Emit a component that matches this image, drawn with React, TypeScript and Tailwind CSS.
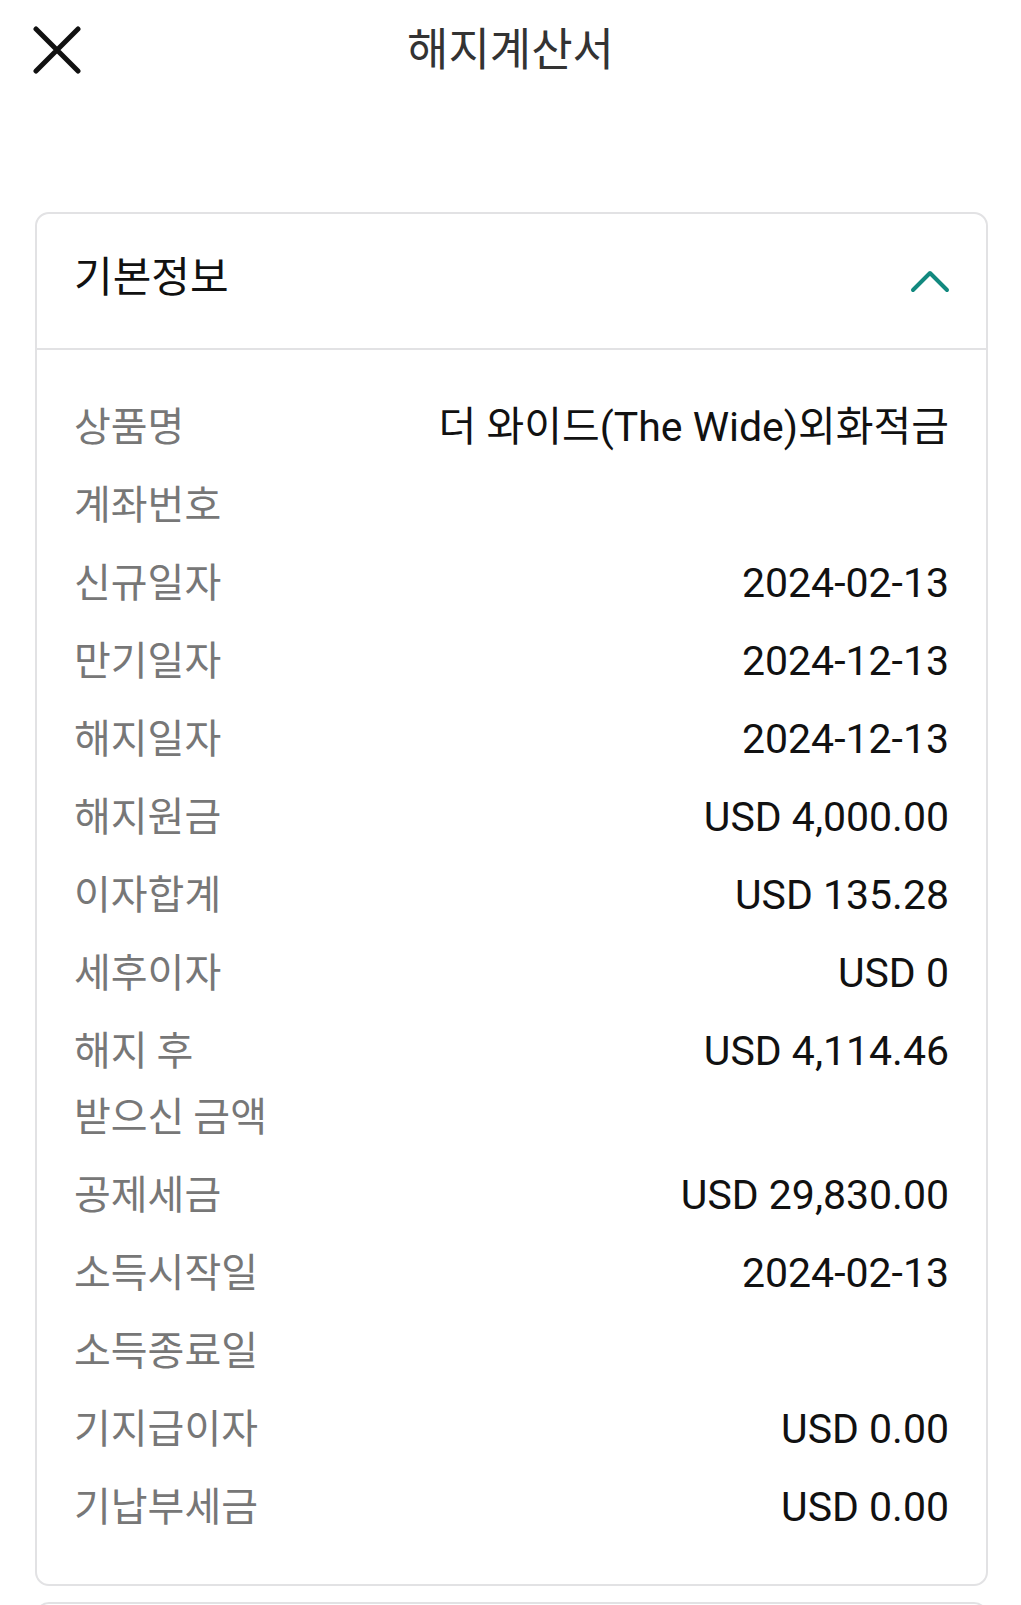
const rows: { label: React.ReactNode; value?: string }[] = [
  { label: '상품명', value: '더 와이드(The Wide)외화적금' },
  { label: '계좌번호' },
  { label: '신규일자', value: '2024-02-13' },
  { label: '만기일자', value: '2024-12-13' },
  { label: '해지일자', value: '2024-12-13' },
  { label: '해지원금', value: 'USD 4,000.00' },
  { label: '이자합계', value: 'USD 135.28' },
  { label: '세후이자', value: 'USD 0' },
  {
    label: (
      <>
        해지 후
        <br />
        받으신 금액
      </>
    ),
    value: 'USD 4,114.46',
  },
  { label: '공제세금', value: 'USD 29,830.00' },
  { label: '소득시작일', value: '2024-02-13' },
  { label: '소득종료일' },
  { label: '기지급이자', value: 'USD 0.00' },
  { label: '기납부세금', value: 'USD 0.00' },
]

const kr = { fontFamily: '"Noto Sans CJK KR", sans-serif' }

function CloseIcon() {
  return (
    <svg width="48" height="48" viewBox="0 0 48 48" fill="none">
      <path d="M3 3L45 45M45 3L3 45" stroke="#111" strokeWidth="5" strokeLinecap="round" />
    </svg>
  )
}

function ChevronUp() {
  return (
    <svg width="40" height="24" viewBox="0 0 40 24" fill="none">
      <path d="M3 21L20 4L37 21" stroke="#12897f" strokeWidth="4" strokeLinecap="round" strokeLinejoin="round" />
    </svg>
  )
}

export default function App() {
  return (
    <div
      className="h-[1605px] overflow-hidden bg-white"
      style={{ fontFamily: 'Roboto, "Noto Sans CJK KR", sans-serif' }}
    >
      {/* top bar */}
      <div className="grid h-[98px] grid-cols-[1fr_auto_1fr] items-center">
        <div className="pl-[33px] pt-[2px]">
          <CloseIcon />
        </div>
        <h1 className="pb-[6px] text-[45px] font-normal leading-none text-[#333]" style={kr}>
          해지계산서
        </h1>
        <div />
      </div>

      {/* basic info card */}
      <div className="ml-[35px] mr-[33px] mt-[114px] rounded-[14px] border-2 border-[#e2e2e4]">
        <div className="flex h-[136px] items-center justify-between border-b-2 border-[#e2e2e4] pl-[37px] pr-[36px]">
          <span className="pb-[15px] text-[42px] leading-none text-[#111]" style={kr}>
            기본정보
          </span>
          <ChevronUp />
        </div>
        <div className="flex flex-col gap-[12px] pb-[44px] pl-[37px] pr-[37px] pt-[44px]">
          {rows.map((r, i) => (
            <div key={i} className="flex items-start justify-between">
              <span className="relative -top-[3px] shrink-0 text-[40px] leading-[66px] text-[#777]" style={kr}>
                {r.label}
              </span>
              {r.value && (
                <span className="h-[66px] text-right text-[41px] leading-[66px] text-[#111]">{r.value}</span>
              )}
            </div>
          ))}
        </div>
      </div>

      {/* next card (cut off) */}
      <div className="ml-[35px] mr-[33px] mt-[16px] h-[120px] rounded-[14px] border-2 border-[#e2e2e4]" />
    </div>
  )
}
